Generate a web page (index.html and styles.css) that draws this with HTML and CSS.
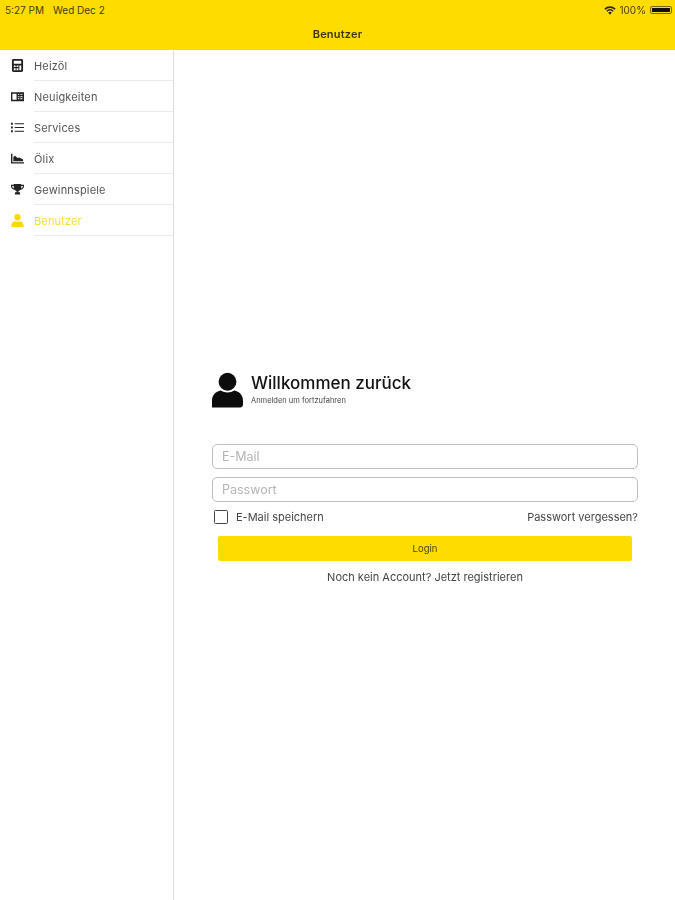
FILE: index.html
```html
<!DOCTYPE html>
<html lang="de">
<head>
<meta charset="utf-8">
<title>Benutzer</title>
<link rel="stylesheet" href="styles.css">
</head>
<body>
<div class="app">
  <header class="topbar">
    <div class="status">
      <div class="status-left"><span>5:27 PM</span><span>Wed Dec 2</span></div>
      <div class="status-right">
        <svg class="wifi" viewBox="0 0 16 12"><path d="M8 11.5 5.6 8.9a3.4 3.4 0 0 1 4.8 0zM4.5 7.8 3 6.2a7 7 0 0 1 10 0l-1.5 1.6a5 5 0 0 0-7 0zM1.9 5 .4 3.5a10.8 10.8 0 0 1 15.2 0L14.100 5a8.700 8.700 0 0 0-12.200 0z"/></svg>
        <span>100%</span>
        <span class="battery"><span class="battery-fill"></span></span>
      </div>
    </div>
    <div class="title">Benutzer</div>
  </header>
  <div class="body">
    <nav class="sidebar">
      <a class="item"><svg class="ico" viewBox="0 0 12 14"><path fill-rule="evenodd" d="M1.500 0h9A1.500 1.500 0 0 1 12 1.500v11a1.500 1.500 0 0 1-1.500 1.500h-9A1.500 1.500 0 0 1 0 12.500v-11A1.500 1.500 0 0 1 1.500 0zM2 2v3h8V2zM2 7v1.500h2V7zm3 0v1.500h2V7zm3 0v5h2V7zM2 10v2h2v-2zm3 0v2h2v-2z"/></svg><span class="label">Heizöl</span></a>
      <a class="item"><svg class="ico" viewBox="0 0 14 11"><path fill-rule="evenodd" d="M0 1h14v9.500H0zM1.500 2.500v6.500H6V2.500zM7.500 3v1H9V3zm2.500 0v1h2.500V3zM7.500 5.200v1H9v-1zm2.500 0v1h2.500v-1zM7.500 7.400v1H9v-1zm2.500 0v1h2.500v-1z"/></svg><span class="label">Neuigkeiten</span></a>
      <a class="item"><svg class="ico" viewBox="0 0 14 12"><path d="M0 1h2v2H0zM4 1.400h10v1.200H4zM0 5h2v2H0zM4 5.400h10v1.200H4zM0 9h2v2H0zM4 9.400h10v1.200H4z"/></svg><span class="label">Services</span></a>
      <a class="item"><svg class="ico" viewBox="0 0 14 12"><path d="M0 1h1.500v9H14v1.500H0zM2.500 4.500 4.500 3l2.500 2.500L9 5l4 2v2H2.500z"/></svg><span class="label">Ölix</span></a>
      <a class="item"><svg class="ico" viewBox="0 0 14 12"><path d="M3 0h8v1h3v1.500C14 4.500 12.500 6 10.500 6.200 9.800 7 9 7.400 8 7.600V9h1.500l.5 2.500H4L4.500 9H6V7.600C5 7.400 4.200 7 3.500 6.200 1.500 6 0 4.500 0 2.500V1h3zM1.200 2.200v.3c0 1 .7 2 1.900 2.400-.1-.8-.1-1.800-.1-2.700zm11.600 0H11c0 .9 0 1.900-.1 2.700 1.200-.4 1.900-1.400 1.900-2.400z"/></svg><span class="label">Gewinnspiele</span></a>
      <a class="item active"><svg class="ico" viewBox="0 0 12 13"><circle cx="6" cy="3.300" r="3.200"/><path d="M0 13v-1.800C0 8.800 1.800 7.200 3.500 7.200c.8.400 1.600.6 2.500.6s1.700-.2 2.500-.6c1.700 0 3.500 1.600 3.500 4V13z"/></svg><span class="label">Benutzer</span></a>
    </nav>
    <main class="content">
      <form class="login">
        <div class="welcome">
          <svg class="avatar" viewBox="0 0 32 36"><circle cx="16" cy="9.500" r="9.200"/><path d="M0 36v-7c0-6 4-9.500 9-10.500 2 1.300 4.500 2 7 2s5-.7 7-2c5 1 9 4.500 9 10.500v4c0 1.800-1.200 3-3 3z"/></svg>
          <div class="welcome-text">
            <h1>Willkommen zurück</h1>
            <p>Anmelden um fortzufahren</p>
          </div>
        </div>
        <div class="fields">
          <div class="field">E-Mail</div>
          <div class="field">Passwort</div>
        </div>
        <div class="options">
          <label class="remember"><span class="check"></span>E-Mail speichern</label>
          <span class="forgot">Passwort vergessen?</span>
        </div>
        <div class="button">Login</div>
        <div class="register">Noch kein Account? Jetzt registrieren</div>
      </form>
    </main>
  </div>
</div>
</body>
</html>
```

FILE: styles.css
```css
* { box-sizing: border-box; }
html, body { margin: 0; padding: 0; background: #fff; }
body { font-family: Inter, "Liberation Sans", sans-serif; color: #222; }
.app { width: 675px; height: 900px; display: flex; flex-direction: column; overflow: hidden; filter: blur(0.45px); }

.topbar { height: 50px; background: #ffdc00; display: flex; flex-direction: column; flex: none; }
.status { height: 18px; padding: 2px 3px 0 5px; display: flex; justify-content: space-between; align-items: center; font-size: 10px; color: #443c00; }
.status-left { display: flex; gap: 9px; }
.status-right { display: flex; align-items: center; gap: 3px; }
.wifi { width: 12px; height: 9px; fill: #2c2700; }
.battery { width: 22px; height: 8px; padding: 1px; border: 1px solid #776a00; border-radius: 2px; margin-left: 1px; display: flex; }
.battery-fill { flex: 1; background: #111; }
.title { text-align: center; font-size: 11px; font-weight: 600; color: #3a3400; margin-top: 9px; letter-spacing: 0.2px; }

.body { flex: 1; display: flex; min-height: 0; }
.sidebar { width: 174px; flex: none; border-right: 1px solid #dcdcdc; }
.item { height: 31px; display: flex; align-items: center; padding-left: 11px; font-size: 11px; color: #555; position: relative; }
.item::after { content: ""; position: absolute; left: 34px; right: 0; bottom: 0; height: 1px; background: #ebebeb; }
.ico { width: 13px; height: 13px; fill: #222; flex: none; }
.label { margin-left: 10px; letter-spacing: 0.15px; }
.active { color: #ffdc33; }
.active .ico { fill: #ffd800; }

.content { flex: 1; padding: 322px 37px 0 38px; }
.login { display: flex; flex-direction: column; }
.welcome { display: flex; align-items: flex-start; gap: 8px; }
.avatar { width: 31px; height: 36px; fill: #0c0c0c; flex: none; }
.welcome-text { padding-top: 1px; }
.welcome h1 { margin: 0; font-size: 17px; line-height: 21px; font-weight: 500; color: #111; letter-spacing: 0; }
.welcome p { margin: 2px 0 0; font-size: 7.5px; line-height: 10px; color: #444; }

.fields { margin-top: 36px; display: flex; flex-direction: column; gap: 8px; }
.field { height: 25px; border: 1px solid #bdbdbd; border-radius: 5px; padding-left: 9px; font-size: 12.500px; line-height: 23px; color: #b4b4b4; }

.options { display: flex; justify-content: space-between; align-items: center; margin-top: 6px; height: 18px; font-size: 11px; color: #444; }
.remember { display: flex; align-items: center; gap: 8px; padding-left: 2px; }
.check { width: 14px; height: 14px; border: 1.500px solid #444; border-radius: 1.500px; }

.button { margin: 10px 6px 0; height: 25px; background: #ffdc00; border-radius: 2px; text-align: center; font-size: 9.500px; line-height: 25px; color: #4a4300; }
.register { margin-top: 9px; text-align: center; font-size: 11px; line-height: 14px; color: #444; }
```
